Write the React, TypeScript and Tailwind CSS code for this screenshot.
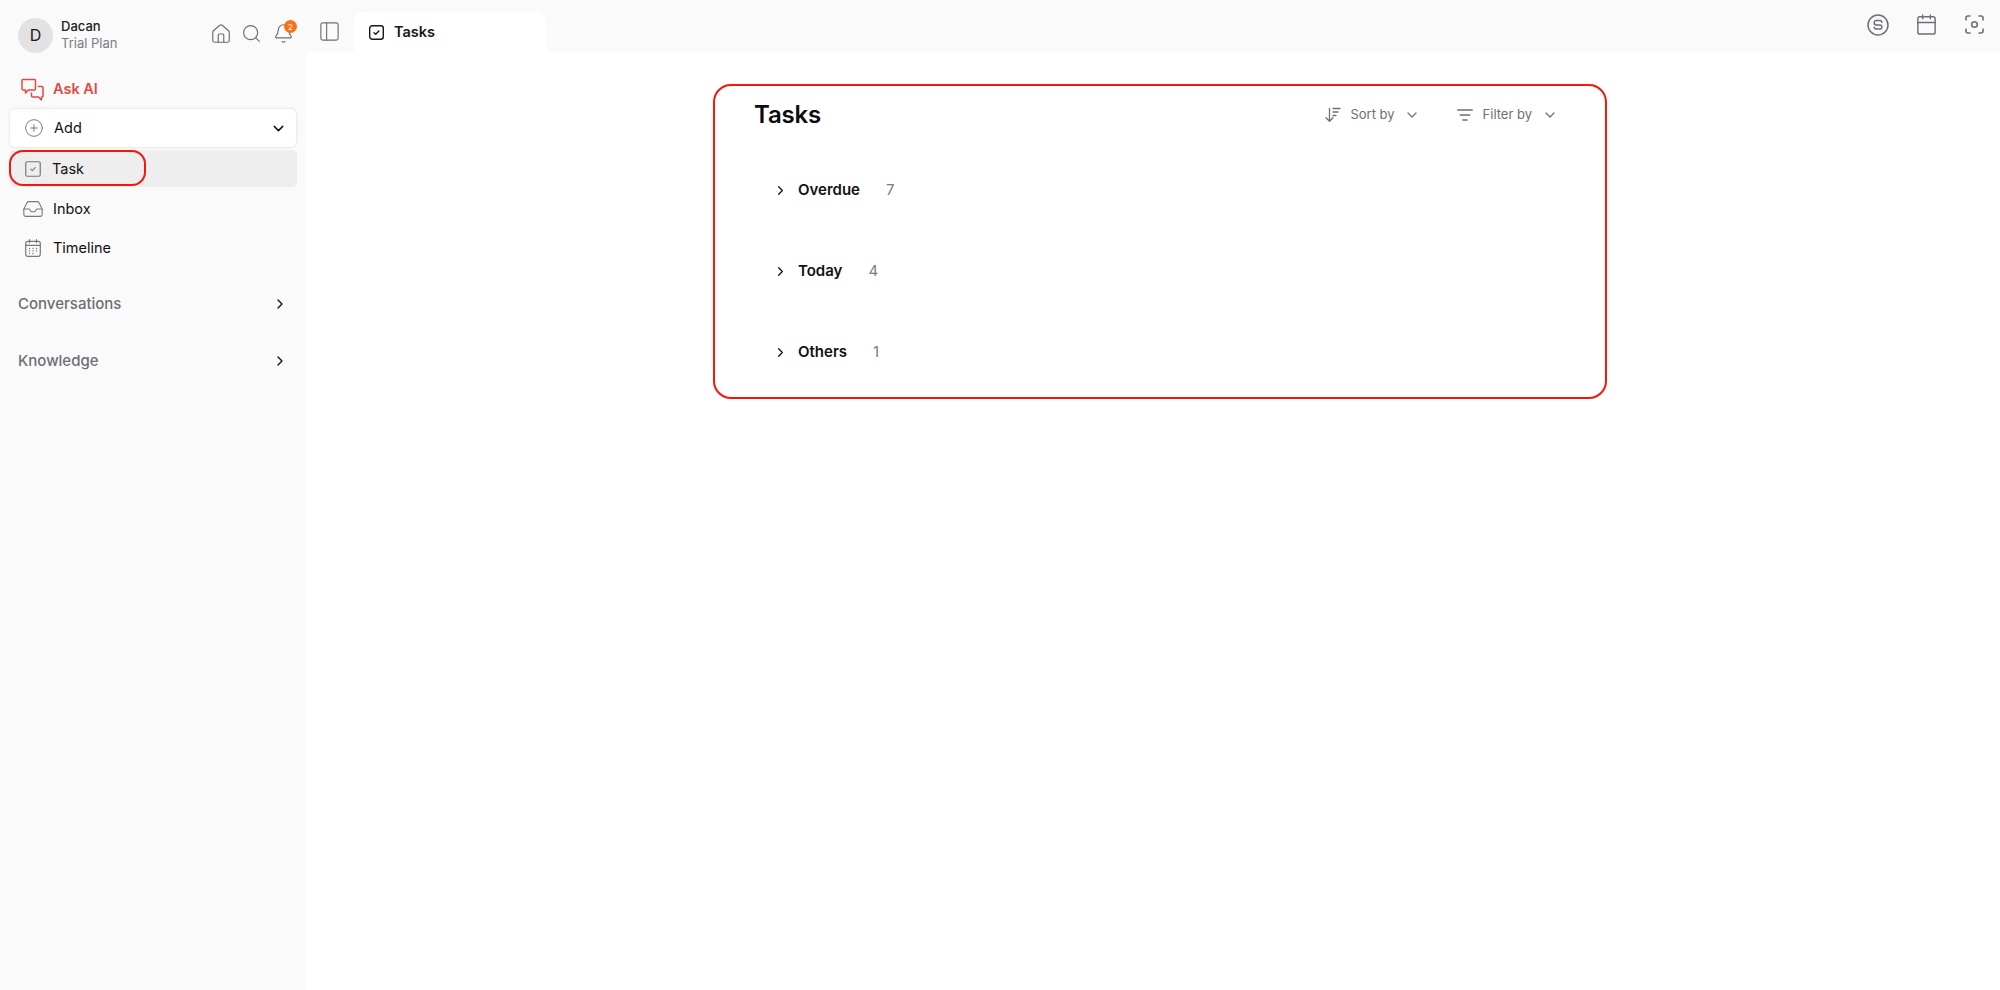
import { ChevronDown, ChevronRight, Home, Search, Bell, CirclePlus, Inbox, PanelLeft, Calendar } from 'lucide-react'

const font = { fontFamily: 'Inter, "Noto Sans", sans-serif' }

function AskIcon() {
  return (
    <svg width="23" height="23" viewBox="0 0 23 23" fill="none" stroke="#e5483f" strokeWidth="1.5" strokeLinejoin="round" strokeLinecap="round">
      <path d="M2 1.500h11.500a1 1 0 0 1 1 1v8.500a1 1 0 0 1-1 1H7.500l-3 3v-3H2a1 1 0 0 1-1-1V2.500a1 1 0 0 1 1-1z" />
      <path d="M17.500 8.500h3.500a1 1 0 0 1 1 1V18a1 1 0 0 1-1 1h-.5v3l-3-3h-6a1 1 0 0 1-1-1v-3" />
    </svg>
  )
}

function TaskIcon() {
  return (
    <svg width="16" height="16" viewBox="0 0 16 16" fill="none">
      <rect x="0.75" y="0.75" width="14.5" height="14.5" rx="1.500" stroke="#77777f" strokeWidth="1.200" />
      <path d="M5.800 8.100l1.500 1.500 2.900-3" stroke="#77777f" strokeWidth="1.100" strokeLinecap="round" strokeLinejoin="round" />
    </svg>
  )
}

function TimelineIcon() {
  return (
    <svg width="16" height="18" viewBox="0 0 16 18" fill="none" stroke="#77777f" strokeWidth="1.2" strokeLinecap="round">
      <rect x="0.7" y="2.300" width="14.600" height="15" rx="2" />
      <path d="M0.700 6.300h14.600M4.500 0.700v3M11.500 0.700v3" />
      <path d="M4.500 9.500h.01M8 9.500h.01M11.500 9.500h.01M4.500 12h.01M8 12h.01M11.500 12h.01M4.500 14.500h.01M8 14.500h.01" strokeWidth="1.300" />
    </svg>
  )
}

function TabCheckIcon() {
  return (
    <svg width="15" height="15" viewBox="0 0 15 15" fill="none">
      <rect x="0.7" y="0.7" width="13.600" height="13.600" rx="2.500" stroke="#18181b" strokeWidth="1.400" />
      <path d="M5 7.700l1.700 1.600 3.200-3.300" stroke="#18181b" strokeWidth="1.400" strokeLinecap="round" strokeLinejoin="round" />
    </svg>
  )
}

function CircleS() {
  return (
    <svg width="22" height="22" viewBox="0 0 22 22" fill="none" stroke="#6e6e76" strokeWidth="1.500" strokeLinecap="round" strokeLinejoin="round">
      <circle cx="11" cy="11" r="10" />
      <path d="M14.800 8.200c0-1.100-.9-1.700-2-1.700H9.300c-1.200 0-2.100.8-2.100 2s.9 2.500 2.100 2.500h3.500c1.200 0 2.100.8 2.100 2s-.9 2-2.100 2H9.200c-1.100 0-2-.6-2-1.700" />
    </svg>
  )
}

function FocusIcon() {
  return (
    <svg width="19" height="19" viewBox="0 0 19 19" fill="none" stroke="#6e6e76" strokeWidth="1.600" strokeLinecap="round">
      <path d="M1 5V3a2 2 0 0 1 2-2h2M14 1h2a2 2 0 0 1 2 2v2M18 14v2a2 2 0 0 1-2 2h-2M5 18H3a2 2 0 0 1-2-2v-2" />
      <circle cx="9.500" cy="9.500" r="2.800" />
    </svg>
  )
}

function SortIcon() {
  return (
    <svg width="16" height="16" viewBox="0 0 16 16" fill="none" stroke="#6e6e76" strokeWidth="1.300" strokeLinecap="round" strokeLinejoin="round">
      <path d="M4.500 1.500v12.500M1 10.800L4.500 14.300 8 10.800" />
      <path d="M8 1.500h7M8 5h5M8 8.500h3" />
    </svg>
  )
}

function FilterIcon() {
  return (
    <svg width="16" height="12" viewBox="0 0 16 12" fill="none" stroke="#6e6e76" strokeWidth="1.300" strokeLinecap="round">
      <path d="M0.700 1h14.600M3.200 6h9.600M5.800 11h4.400" />
    </svg>
  )
}

function SideRow({ icon, label }: { icon: React.ReactNode; label: string }) {
  return (
    <div className="flex h-[39px] items-center pl-[12px]">
      <div className="flex w-[32px] shrink-0 justify-start pl-[1px]">{icon}</div>
      <span className="text-[14.500px] text-[#111114]">{label}</span>
    </div>
  )
}

function Group({ label, count }: { label: string; count: number }) {
  return (
    <div className="flex h-[81px] items-center">
      <ChevronRight size={15} strokeWidth={2} className="mr-[10px] text-[#111114]" />
      <span className="mr-[26px] text-[15px] font-semibold text-[#111114]">{label}</span>
      <span className="text-[15px] text-[#7b7b83]">{count}</span>
    </div>
  )
}

export default function App() {
  return (
    <div className="flex h-[990px] w-[2000px] overflow-hidden bg-white" style={font}>
      <aside className="flex w-[306px] shrink-0 flex-col bg-[#fafafa]">
        <div className="flex h-[70px] shrink-0 items-center pl-[18px] pr-[12px]">
          <div className="flex h-[35px] w-[35px] items-center justify-center rounded-full bg-[#e2e2e2] text-[16px] text-[#18181b]">D</div>
          <div className="ml-[8px] leading-[17px]">
            <div className="text-[13px] font-medium text-[#222226]">Dacan</div>
            <div className="text-[13px] text-[#7b7b83]">Trial Plan</div>
          </div>
          <div className="ml-auto mb-[3px] flex items-center gap-[9px] text-[#6e6e76]">
            <Home size={22} strokeWidth={1.300} />
            <Search size={21} strokeWidth={1.300} className="mr-[2px]" />
            <div className="relative">
              <Bell size={21} strokeWidth={1.300} />
              <span className="absolute -right-[3px] -top-[3px] flex h-[13px] w-[13px] items-center justify-center rounded-full bg-[#f97316] text-[8px] text-white">2</span>
            </div>
          </div>
        </div>

        <div className="mt-[1px] flex h-[36px] items-center pl-[21px]">
          <AskIcon />
          <span className="ml-[9px] text-[14.500px] font-semibold text-[#e5483f]">Ask AI</span>
        </div>

        <div className="mx-[10px] mt-[2px] flex h-[38px] items-center rounded-[5px] bg-white pl-[14px] pr-[9px] shadow-[0_0_3px_rgba(0,0,0,0.16)]">
          <CirclePlus size={20} strokeWidth={1.100} className="text-[#6e6e76]" />
          <span className="ml-[10px] text-[14.500px] text-[#111114]">Add</span>
          <ChevronDown size={17} strokeWidth={2} className="ml-auto text-[#111114]" />
        </div>

        <div className="relative mx-[9px] mt-[3px] flex h-[37px] items-center rounded-[5px] bg-[#eeeeee] pl-[16px]">
          <TaskIcon />
          <span className="ml-[11px] text-[14.500px] text-[#111114]">Task</span>
          <div className="absolute left-0 top-0 h-[36px] w-[137px] rounded-[14px] border-2 border-[#f5160c]" />
        </div>

        <div className="mx-[9px] mt-[2px]">
          <SideRow icon={<Inbox size={22} strokeWidth={1.200} className="text-[#77777f]" />} label="Inbox" />
          <SideRow icon={<div className="pl-[3px]"><TimelineIcon /></div>} label="Timeline" />
        </div>

        <div className="mt-[22px] flex h-[30px] items-center pl-[18px] pr-[18px] text-[15px] font-medium text-[#6e6e76]">
          <span>Conversations</span>
          <ChevronRight size={16} strokeWidth={2} className="ml-auto text-[#111114]" />
        </div>
        <div className="mt-[27px] flex h-[30px] items-center pl-[18px] pr-[18px] text-[15px] font-medium text-[#6e6e76]">
          <span>Knowledge</span>
          <ChevronRight size={16} strokeWidth={2} className="ml-auto text-[#111114]" />
        </div>
      </aside>

      <div className="flex min-w-0 flex-1 flex-col">
        <header className="flex h-[52px] shrink-0 items-end bg-[#fafafa]">
          <div className="mb-[9px] ml-[12px] text-[#6e6e76]">
            <PanelLeft size={23} strokeWidth={1.200} />
          </div>
          <div className="ml-[13px] flex h-[40px] w-[192px] items-center rounded-t-[9px] bg-white pl-[15px]">
            <TabCheckIcon />
            <span className="ml-[10px] text-[14.500px] font-semibold text-[#18181b]">Tasks</span>
          </div>
          <div className="mb-[16px] ml-auto mr-[16px] flex items-center gap-[26px] text-[#6e6e76]">
            <CircleS />
            <Calendar size={23} strokeWidth={1.500} className="mr-[1px]" />
            <FocusIcon />
          </div>
        </header>

        <main className="flex-1 pt-[32px]">
          <section className="ml-[407px] h-[315px] w-[894px] rounded-[18px] border-2 border-[#f5160c] pl-[39px] pr-[47px]">
            <div className="flex h-[57px] items-center">
              <h1 className="text-[24px] font-semibold tracking-[-0.2px] text-[#0c0c0e]">Tasks</h1>
              <div className="ml-auto flex items-center text-[13px] text-[#6e6e76]">
                <SortIcon />
                <span className="ml-[9px]">Sort by</span>
                <ChevronDown size={16} strokeWidth={1.800} className="ml-[9px]" />
                <div className="ml-[37px]"><FilterIcon /></div>
                <span className="ml-[10px]">Filter by</span>
                <ChevronDown size={16} strokeWidth={1.800} className="ml-[10px]" />
              </div>
            </div>
            <div className="ml-[19px] mt-[7px]">
              <Group label="Overdue" count={7} />
              <Group label="Today" count={4} />
              <Group label="Others" count={1} />
            </div>
          </section>
        </main>
      </div>
    </div>
  )
}
